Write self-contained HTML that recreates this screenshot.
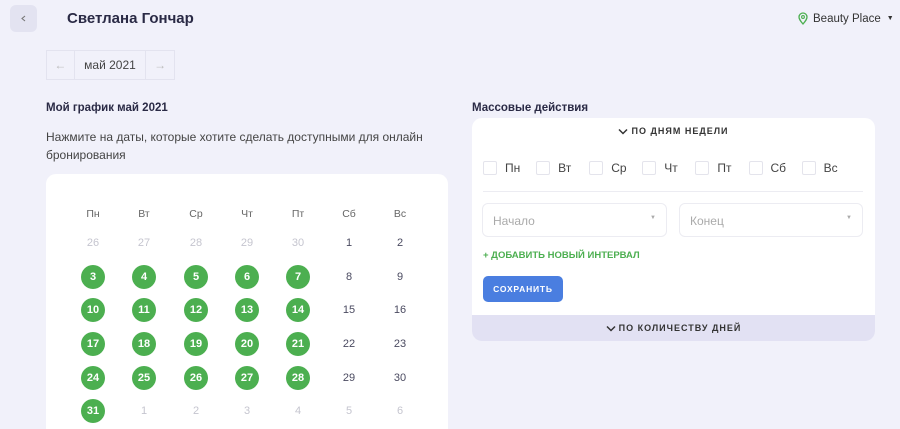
<!DOCTYPE html>
<html><head><meta charset="utf-8"><style>
*{box-sizing:border-box;margin:0;padding:0}
html,body{width:900px;height:429px;overflow:hidden}
body{background:#f1f1fa;font-family:"Liberation Sans",sans-serif;color:#2a2a45;position:relative}
.a{position:absolute}
.back{left:10px;top:5px;width:27px;height:27px;background:#e3e3f1;border-radius:6px}
.nav{left:46px;top:50px;width:129px;height:30px;border:1px solid #e3e3ef;display:flex}
.nav div{display:flex;align-items:center;justify-content:center;font-size:12px;color:#444}
.card{background:#fff;border-radius:10px}
.dh{font-size:10.5px;color:#666;width:40px;text-align:center;margin-left:-20px}
.d{width:24px;height:24px;margin-left:-12px;margin-top:-12px;border-radius:50%;display:flex;align-items:center;justify-content:center;font-size:11px;font-weight:bold}
.g{background:#4caf50;color:#fff}
.n{color:#4a4a60;font-weight:normal}
.m{color:#c5c5cf}
.cb{width:14px;height:14px;border:1px solid #e4e4ec;border-radius:2px}
.cl{font-size:12px;color:#444}
.sel{height:34px;border:1px solid #ececf2;border-radius:6px;font-size:12px;color:#aaa;padding:10px 0 0 10px}
.cap{font-size:9px;font-weight:bold;letter-spacing:1px;color:#333;display:flex;align-items:center;justify-content:center}
.cap svg{margin-right:3px}
</style></head><body>
<div class="a back"><svg width="27" height="27"><path d="M15 11l-3 2.5 3 2.5" stroke="#777" stroke-width="1.1" fill="none"/></svg></div>
<div class="a" style="left:67px;top:10px;font-size:15px;font-weight:bold">Светлана Гончар</div>
<div class="a" style="left:797px;top:12px;font-size:11.5px;color:#333;display:flex;align-items:center"><svg width="12" height="13" style="margin-right:4px"><path d="M6 12C3 8.5 2 7 2 5a4 4 0 0 1 8 0c0 2-1 3.5-4 7z" fill="none" stroke="#4caf50" stroke-width="1.3"/><circle cx="6" cy="5" r="1.4" fill="none" stroke="#4caf50" stroke-width="1.1"/></svg>Beauty Place<span style="font-size:7px;margin-left:6px">▼</span></div>
<div class="a nav"><div style="width:28px;border-right:1px solid #e3e3ef;color:#bbb">←</div><div style="width:72px;border-right:1px solid #e3e3ef">май 2021</div><div style="width:28px;color:#bbb">→</div></div>
<div class="a" style="left:46px;top:102px;font-size:11.5px;font-weight:bold">Мой график май 2021</div>
<div class="a" style="left:46px;top:128px;font-size:12px;line-height:18px;color:#444">Нажмите на даты, которые хотите сделать доступными для онлайн<br>бронирования</div>
<div class="a card" style="left:46px;top:174px;width:402px;height:270px"></div>
<div id="cal"></div>
<div class="a" style="left:472px;top:102px;font-size:11.5px;font-weight:bold">Массовые действия</div>
<div class="a card" style="left:472px;top:118px;width:403px;height:223px;overflow:hidden">
<div class="a cap" style="left:0;width:100%;top:8px"><svg width="10" height="7"><path d="M1 1.5l4 4 4-4" stroke="#333" stroke-width="1.5" fill="none"/></svg>ПО ДНЯМ НЕДЕЛИ</div>
<div class="a" style="left:11px;top:73px;width:380px;height:1px;background:#ececf2"></div>
<div class="a sel" style="left:10px;top:85px;width:185px">Начало<span style="position:absolute;right:10px;top:11px;font-size:6px">▼</span></div>
<div class="a sel" style="left:207px;top:85px;width:184px">Конец<span style="position:absolute;right:10px;top:11px;font-size:6px">▼</span></div>
<div class="a" style="left:11px;top:132px;font-size:9.5px;font-weight:bold;color:#4caf50">+ ДОБАВИТЬ НОВЫЙ ИНТЕРВАЛ</div>
<div class="a" style="left:11px;top:158px;width:80px;height:26px;background:#4a7ee0;border-radius:5px;color:#fff;font-size:8.5px;font-weight:bold;letter-spacing:.8px;display:flex;align-items:center;justify-content:center">СОХРАНИТЬ</div>
<div class="a" style="left:0;top:197px;width:100%;height:26px;background:#e2e1f3"></div>
<div class="a cap" style="left:0;width:100%;top:205px"><svg width="10" height="7"><path d="M1 1.5l4 4 4-4" stroke="#333" stroke-width="1.5" fill="none"/></svg>ПО КОЛИЧЕСТВУ ДНЕЙ</div>
</div>
<div id="cbs"></div>
<script>
var h='',xs=[93,144,196,247,298,349,400],ys=[243,277,310,344,378,411],hd=['Пн','Вт','Ср','Чт','Пт','Сб','Вс'];
hd.forEach(function(t,i){h+='<div class="a dh" style="left:'+xs[i]+'px;top:208px">'+t+'</div>'});
var cells=[26,27,28,29,30,1,2];for(var d=3;d<=31;d++)cells.push(d);cells=cells.concat([1,2,3,4,5,6]);
cells.forEach(function(v,k){var r=Math.floor(k/7),c=k%7,cls='n';
if(r==0&&c<5||r==5&&c>0)cls='n m';else if(c<5)cls='g';
h+='<div class="a d '+cls+'" style="left:'+xs[c]+'px;top:'+ys[r]+'px">'+v+'</div>'});
document.getElementById('cal').innerHTML=h;
var s='';hd.forEach(function(t,i){var x=483+i*53.1;s+='<div class="a cb" style="left:'+x+'px;top:161px"></div><div class="a cl" style="left:'+(x+22)+'px;top:161px">'+t+'</div>'});
document.getElementById('cbs').innerHTML=s;
</script>
</body></html>
